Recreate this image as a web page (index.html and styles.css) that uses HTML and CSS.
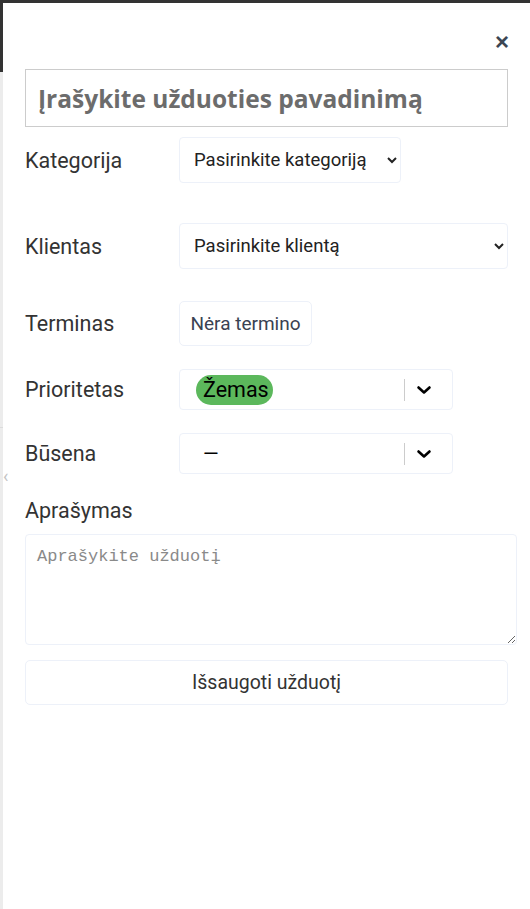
FILE: index.html
```html
<!DOCTYPE html>
<html lang="lt">
<head>
<meta charset="utf-8">
<link rel="stylesheet" href="styles.css">
</head>
<body>
<div class="topbar"></div>
<div class="main">
  <div class="rail"><span class="rail-arrow">‹</span></div>
  <div class="panel">
    <div class="close-row"><button class="close" type="button">×</button></div>
    <input class="title-input" type="text" placeholder="Įrašykite užduoties pavadinimą">
    <div class="row row-cat">
      <label class="label">Kategorija</label>
      <select class="native-select sel-cat"><option>Pasirinkite kategoriją</option></select>
    </div>
    <div class="row row-client">
      <label class="label">Klientas</label>
      <select class="native-select sel-client"><option>Pasirinkite klientą</option></select>
    </div>
    <div class="row row-term">
      <label class="label">Terminas</label>
      <button class="term-btn" type="button">Nėra termino</button>
    </div>
    <div class="row row-prio">
      <label class="label">Prioritetas</label>
      <div class="rselect">
        <div class="rselect-value"><span class="pill">Žemas</span></div>
        <div class="rselect-ind">
          <span class="sep"></span>
          <svg class="chev" width="20" height="20" viewBox="0 0 20 20"><path d="M4.5 7.5 L10 12.5 L15.5 7.5" fill="none" stroke="#000" stroke-width="2.6" stroke-linecap="round" stroke-linejoin="round"/></svg>
        </div>
      </div>
    </div>
    <div class="row row-status">
      <label class="label">Būsena</label>
      <div class="rselect">
        <div class="rselect-value"><span class="dash">—</span></div>
        <div class="rselect-ind">
          <span class="sep"></span>
          <svg class="chev" width="20" height="20" viewBox="0 0 20 20"><path d="M4.5 7.5 L10 12.5 L15.5 7.5" fill="none" stroke="#000" stroke-width="2.6" stroke-linecap="round" stroke-linejoin="round"/></svg>
        </div>
      </div>
    </div>
    <div class="desc-label">Aprašymas</div>
    <textarea class="desc" placeholder="Aprašykite užduotį"></textarea>
    <button class="save" type="button">Išsaugoti užduotį</button>
  </div>
</div>
</body>
</html>
```
FILE: styles.css
```css
html, body {
  margin: 0;
  padding: 0;
  background: #fff;
  font-family: Roboto, "Liberation Sans", sans-serif;
}
.topbar {
  height: 3px;
  background: #333;
}
.main {
  display: flex;
  min-height: 906px;
}
.rail {
  width: 3px;
  flex: none;
  position: relative;
  background: linear-gradient(#333 0, #333 69px, #ececec 69px, #ececec 424px, #dcdcdc 424px, #dcdcdc 425px, #ececec 425px);
}
.rail-arrow {
  position: absolute;
  left: 3px;
  top: 463px;
  font-size: 18px;
  color: #c4c4c4;
  line-height: 20px;
}
.panel {
  flex: 1;
  padding: 0 22px 0 22px;
  display: flex;
  flex-direction: column;
}
.close-row {
  display: flex;
  justify-content: flex-end;
  height: 66px;
}
.close {
  border: 0;
  background: none;
  font-family: "Liberation Sans", Arial, sans-serif;
  font-size: 24px;
  font-weight: bold;
  color: #3b4653;
  padding: 0;
  margin: 24px 0 0 0;
  width: 30px;
  height: 30px;
  line-height: 30px;
  text-align: center;
}
.title-input {
  box-sizing: border-box;
  height: 58px;
  width: 483px;
  border: 1px solid #ccc;
  padding: 0 12px;
  font-family: "Open Sans", sans-serif;
  font-weight: 700;
  font-size: 24.5px;
  color: #333;
  outline: none;
}
.title-input::placeholder {
  color: #6c6c6c;
}
.row {
  display: flex;
  align-items: center;
}
.label {
  width: 154px;
  flex: none;
  font-size: 21.5px;
  color: #333;
}
.row-cat { margin-top: 10px; }
.row-client { margin-top: 40px; }
.row-term { margin-top: 32px; }
.row-prio { margin-top: 23px; }
.row-status { margin-top: 23px; }
.native-select {
  box-sizing: border-box;
  height: 46px;
  border: 1px solid #edf1f9;
  border-radius: 4px;
  background: #fff;
  font-family: Roboto, "Liberation Sans", sans-serif;
  font-size: 18.5px;
  color: #222;
  padding: 0 8px 0 10px;
}
.sel-cat { width: 222px; }
.sel-client { width: 329px; }
.term-btn {
  box-sizing: border-box;
  height: 45px;
  width: 133px;
  border: 1px solid #edf1f9;
  border-radius: 5px;
  background: #fff;
  font-family: Roboto, "Liberation Sans", sans-serif;
  font-size: 19px;
  color: #3a4252;
  padding: 0 6px;
}
.rselect {
  box-sizing: border-box;
  width: 274px;
  height: 41px;
  border: 1px solid #edf1f9;
  border-radius: 4px;
  display: flex;
  align-items: center;
}
.rselect-value {
  flex: 1;
  padding-left: 16px;
  display: flex;
  align-items: center;
}
.pill {
  background: #5cb85c;
  border-radius: 15px;
  height: 30px;
  line-height: 30px;
  padding: 0 4px 0 7px;
  font-size: 21.5px;
  color: #000;
}
.dash {
  padding-left: 7px;
  font-size: 20px;
  color: #000;
}
.rselect-ind {
  display: flex;
  align-items: center;
  height: 100%;
}
.sep {
  width: 1px;
  height: 22px;
  background: #ccc;
}
.chev {
  margin: 0 18px 0 9px;
}
.desc-label {
  margin-top: 24px;
  font-size: 21.5px;
  color: #333;
  line-height: 26px;
}
.desc {
  box-sizing: border-box;
  margin-top: 10px;
  width: 492px;
  height: 111px;
  border: 1px solid #edf1f9;
  border-radius: 4px;
  padding: 12px 11px;
  font-family: "Liberation Mono", monospace;
  font-size: 17px;
  color: #333;
  outline: none;
}
.desc::placeholder {
  color: #8a8a8a;
}
.save {
  box-sizing: border-box;
  margin-top: 15px;
  width: 483px;
  height: 45px;
  border: 1px solid #edf1f9;
  border-radius: 5px;
  background: #fff;
  font-family: Roboto, "Liberation Sans", sans-serif;
  font-size: 19.5px;
  color: #333;
}
```
